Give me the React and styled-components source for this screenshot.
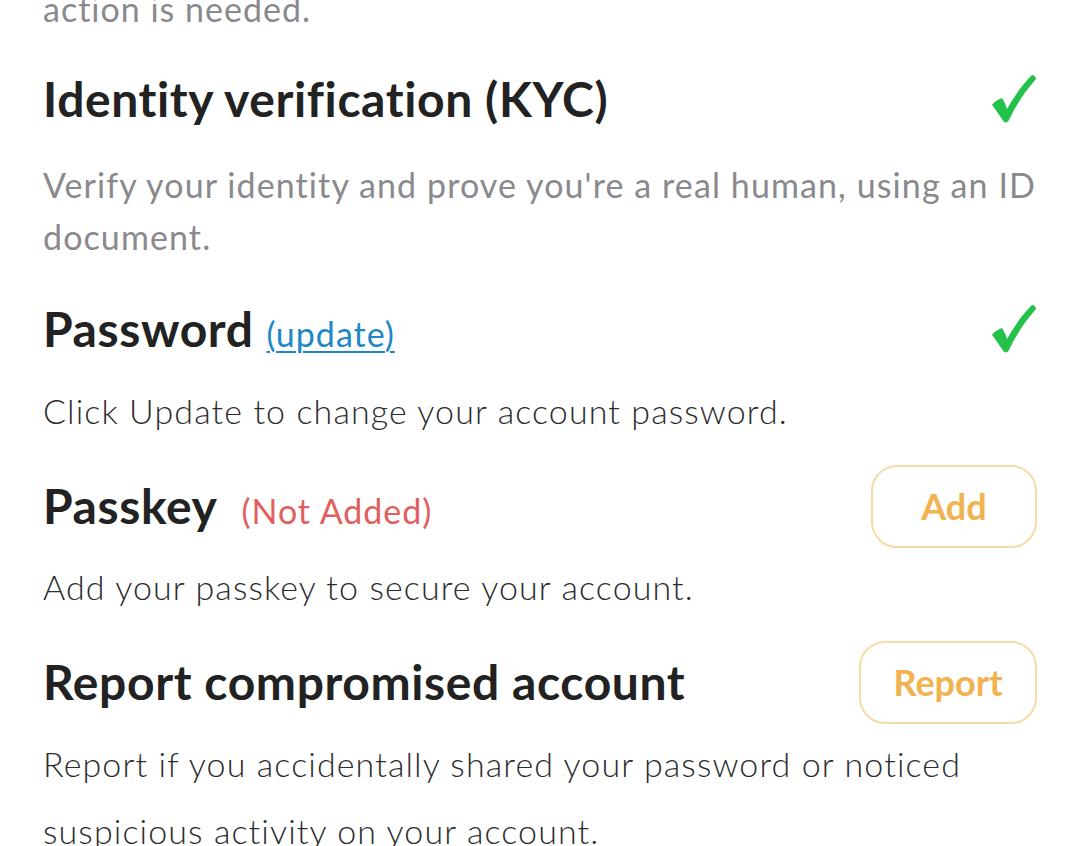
import styled, { createGlobalStyle } from 'styled-components'

const GlobalStyle = createGlobalStyle`
  html, body {
    margin: 0;
    padding: 0;
    background: #ffffff;
    overflow: hidden;
  }
  body {
    font-family: Lato, "Noto Sans", "Liberation Sans", sans-serif;
    color: #222222;
  }
`

const Check = () => (
  <svg width="46" height="50" viewBox="0 0 46 50">
    <path
      d="M1 31 C4 27 8 25 11 24 C13 27 15 31 16 35 C22 24 31 11 41 1 C43 1 45 3 45 5 C35 16 25 31 18 46 C17 48 15 49 13 48 C10 44 6 37 1 31 Z"
      fill="#22c14a"
    />
  </svg>
)

const Page = styled.div`
  padding: 0 43px;
`

const Section = styled.section`
  margin-top: ${p => p.$gap}px;
`

const TitleRow = styled.div`
  display: flex;
  align-items: center;
  justify-content: space-between;
  height: 60px;
`

const TitleGroup = styled.div`
  display: flex;
  align-items: baseline;
`

const Title = styled.h2`
  margin: 0;
  font-size: 48px;
  font-weight: 700;
  line-height: 60px;
  color: #222222;
  letter-spacing: 0.6px;
`

const UpdateLink = styled.a`
  margin-left: 13px;
  font-size: 34px;
  letter-spacing: 1px;
  color: #1e88c7;
  text-decoration: underline;
  text-underline-offset: 4px;
  text-decoration-thickness: 2px;
  cursor: pointer;
`

const Status = styled.span`
  margin-left: 24px;
  font-size: 34px;
  letter-spacing: 1px;
  color: #e06060;
`

const Desc = styled.p`
  margin: ${p => p.$top}px 0 0;
  font-size: 34px;
  letter-spacing: 1.1px;
  font-weight: ${p => (p.$muted ? 400 : 300)};
  line-height: ${p => p.$lh}px;
  color: ${p => (p.$muted ? '#8a898e' : '#2c2c2e')};
`

const Lead = styled(Desc)`
  margin-top: -17px;
  letter-spacing: 1px;
`

const OutlineButton = styled.button`
  flex: none;
  height: 83px;
  min-width: ${p => p.$w}px;
  padding: 0 30px;
  border: 2px solid #f7daa9;
  border-radius: 26px;
  background: #ffffff;
  color: #f1b24f;
  font-family: inherit;
  font-size: 36px;
  font-weight: 700;
  cursor: pointer;
`

export default function App() {
  return (
    <>
      <GlobalStyle />
      <Page>
        <Lead $muted $lh={52}>action is needed.</Lead>

        <Section $gap={34}>
          <TitleRow>
            <Title>Identity verification (KYC)</Title>
            <Check />
          </TitleRow>
          <Desc $muted $lh={52} $top={30}>
            Verify your identity and prove you're a real human, using an ID document.
          </Desc>
        </Section>

        <Section $gap={36}>
          <TitleRow>
            <TitleGroup>
              <Title>Password</Title>
              <UpdateLink>(update)</UpdateLink>
            </TitleGroup>
            <Check />
          </TitleRow>
          <Desc $lh={52} $top={26}>Click Update to change your account password.</Desc>
        </Section>

        <Section $gap={39}>
          <TitleRow>
            <TitleGroup>
              <Title>Passkey</Title>
              <Status>(Not Added)</Status>
            </TitleGroup>
            <OutlineButton $w={166}>Add</OutlineButton>
          </TitleRow>
          <Desc $lh={52} $top={25}>Add your passkey to secure your account.</Desc>
        </Section>

        <Section $gap={39}>
          <TitleRow>
            <Title>Report compromised account</Title>
            <OutlineButton $w={178}>Report</OutlineButton>
          </TitleRow>
          <Desc $lh={67} $top={18}>
            Report if you accidentally shared your password or noticed suspicious activity on your account.
          </Desc>
        </Section>
      </Page>
    </>
  )
}
